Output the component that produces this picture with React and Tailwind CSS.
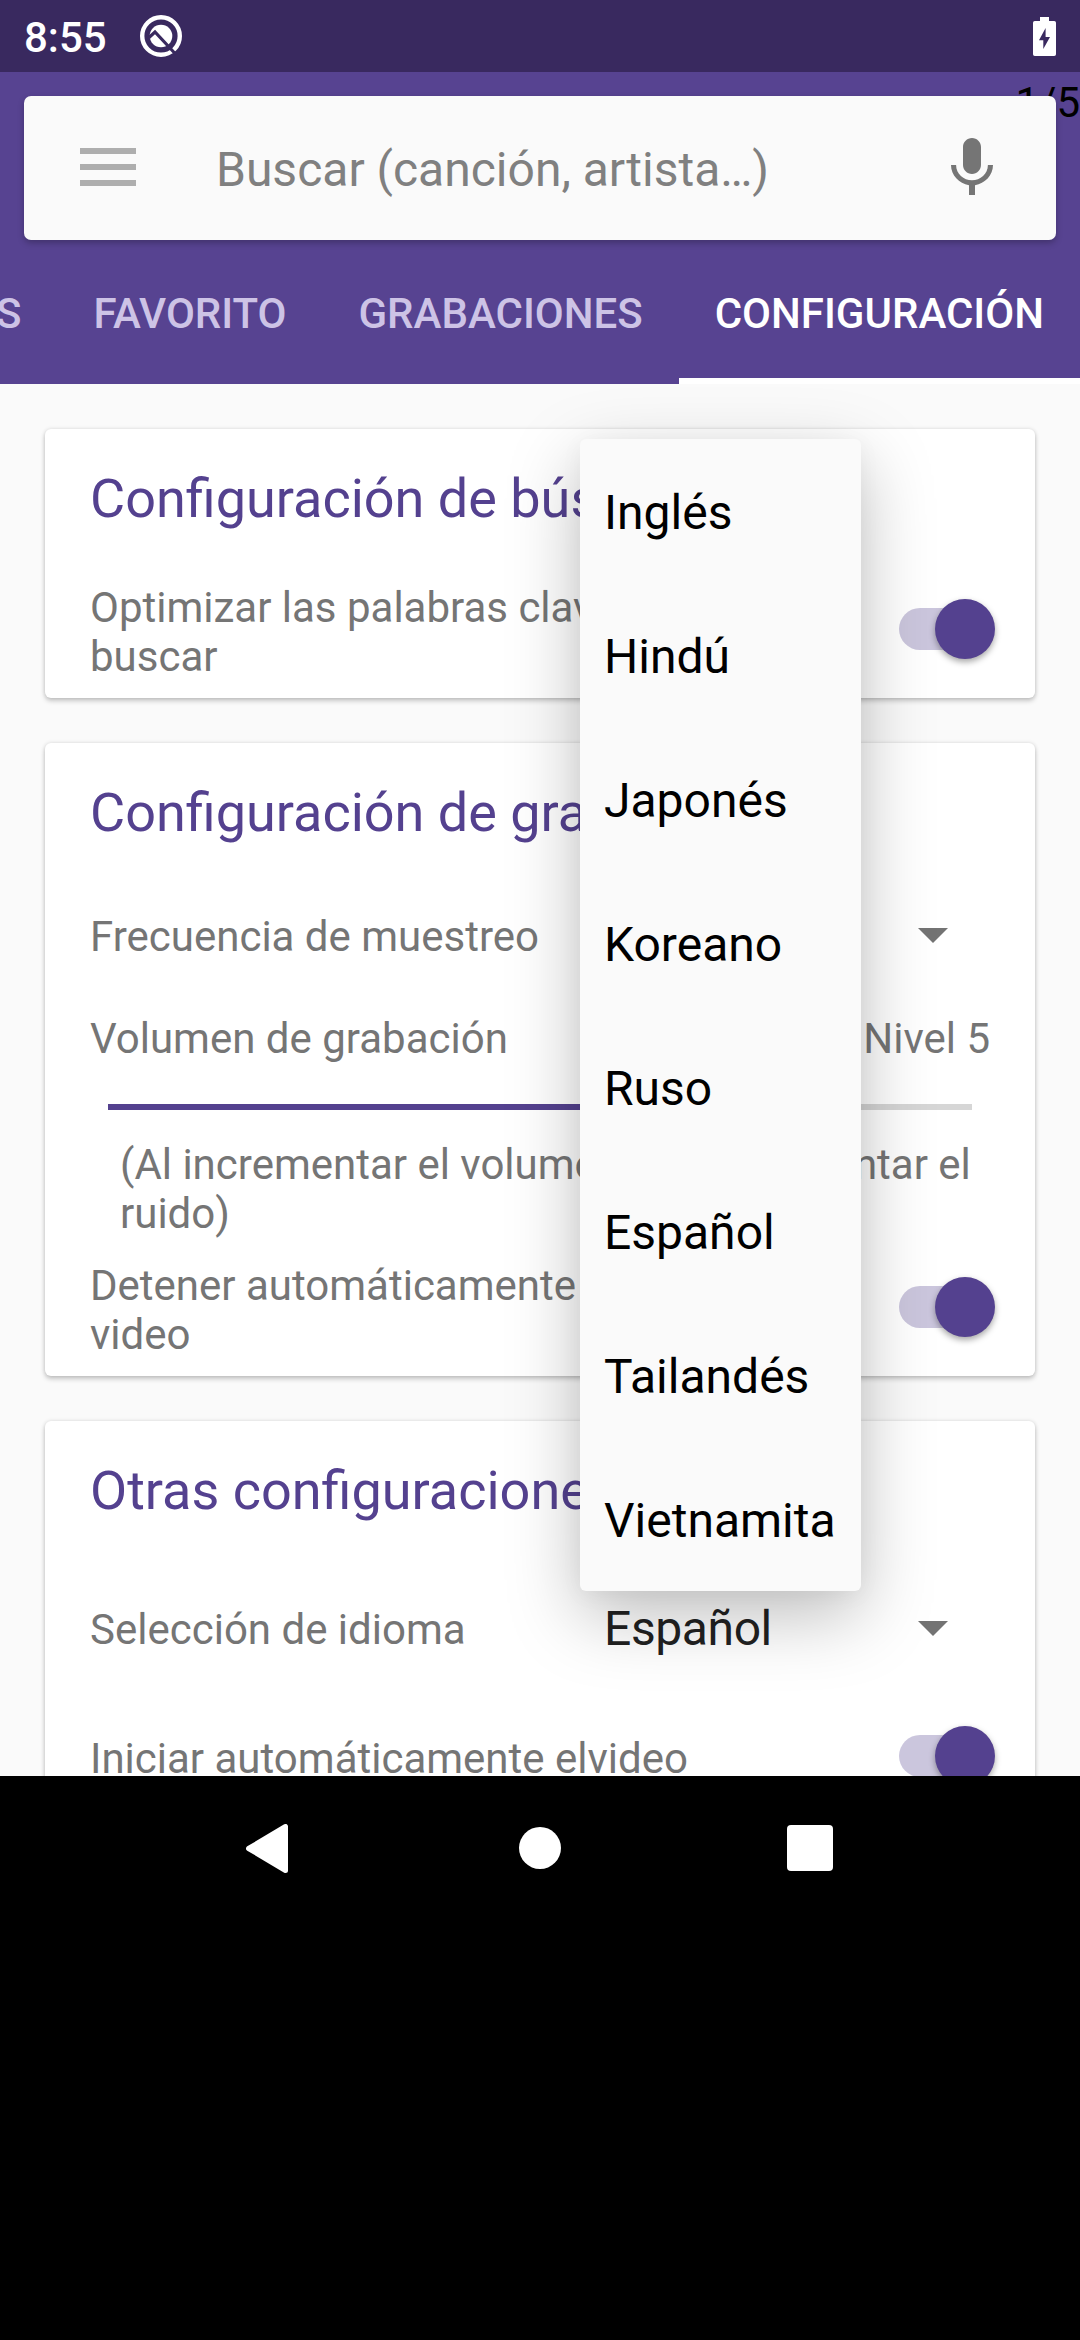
const languages = ["Inglés", "Hindú", "Japonés", "Koreano", "Ruso", "Español", "Tailandés", "Vietnamita"];

function Switch({ className }) {
  return (
    <div className={`relative flex h-[60px] w-[96px] shrink-0 items-center ${className}`}>
      <div className="h-[42px] w-[88px] rounded-full bg-[#54418f]/30" />
      <div className="absolute top-0 right-0 size-[60px] rounded-full bg-[#54418f] shadow-[0_3px_6px_rgba(0,0,0,0.35)]" />
    </div>
  );
}

function Caret({ className }) {
  return (
    <svg className={`h-[15px] w-[30px] shrink-0 ${className}`} viewBox="0 0 30 15">
      <path d="M0 0h30L15 15z" fill="#737373" />
    </svg>
  );
}

function Card({ title, className, children }) {
  return (
    <section
      className={`flex shrink-0 flex-col rounded-[6px] bg-white px-[45px] pt-[38px] shadow-[0_3px_5px_rgba(0,0,0,0.2),0_0_4px_rgba(0,0,0,0.12)] ${className}`}
    >
      <h2 className="h-[63px] shrink-0 text-[54px] leading-[63px] whitespace-nowrap text-[#54418f]">{title}</h2>
      {children}
    </section>
  );
}

function StatusBar() {
  return (
    <div className="flex h-[72px] items-center bg-[#39295f] pr-6 pl-6 text-white">
      <span className="mt-[3px] text-[42px] leading-[49px] font-medium">8:55</span>
      <svg className="ml-8 size-[44px]" viewBox="0 0 44 44">
        <circle cx="22" cy="22" r="18.8" fill="none" stroke="#fff" strokeWidth="4.4" />
        <circle cx="22" cy="22" r="11.3" fill="#fff" />
        <path d="M10 23.500L16 18L37 40.500" fill="none" stroke="#39295f" strokeWidth="3.2" />
      </svg>
      <svg className="ml-auto h-[39px] w-[23px]" viewBox="0 0 23 39">
        <path
          fillRule="evenodd"
          fill="#fff"
          d="M7 0h9v4h5.200a1.800 1.800 0 0 1 1.800 1.800v31.400a1.800 1.800 0 0 1-1.800 1.800H1.800A1.800 1.800 0 0 1 0 37.200V5.800A1.800 1.800 0 0 1 1.800 4H7zM12.600 11L6 23.200h4.300V32L17 20h-4.400z"
        />
      </svg>
    </div>
  );
}

function AppBar() {
  return (
    <header className="relative flex h-[312px] flex-col overflow-hidden bg-[#574391] px-6 pt-6">
      <span className="absolute top-[6px] right-0 text-[42px] leading-[49px] text-black">1/5</span>
      <div className="relative flex h-[144px] shrink-0 items-center rounded-[7px] bg-[#fafafa] pr-12 pl-14 shadow-[0_3px_6px_rgba(0,0,0,0.25)]">
        <div className="mb-[2px] flex w-14 flex-col gap-[10px]">
          <div className="h-[6px] bg-[#aeaeae]" />
          <div className="h-[6px] bg-[#aeaeae]" />
          <div className="h-[6px] bg-[#aeaeae]" />
        </div>
        <span className="mt-[3px] ml-20 text-[48px] leading-[57px] whitespace-nowrap text-[#808080]">
          Buscar (canción, artista…)
        </span>
        <svg className="ml-auto size-[72px]" viewBox="0 0 24 24" fill="#757575">
          <path d="M12 14c1.660 0 2.990-1.340 2.990-3L15 5c0-1.660-1.340-3-3-3S9 3.340 9 5v6c0 1.660 1.340 3 3 3zm5.300-3c0 3-2.540 5.100-5.300 5.100S6.700 14 6.700 11H5c0 3.410 2.720 6.230 6 6.720V21h2v-3.280c3.280-.48 6-3.300 6-6.720h-1.700z" />
        </svg>
      </div>
      <nav className="-mx-6 flex h-[144px] shrink-0 justify-end text-[42px] leading-[49px] font-medium whitespace-nowrap text-[#cdc3e6]">
        <span className="px-9 pt-[49px]">CANCIONES</span>
        <span className="px-9 pt-[49px]">FAVORITO</span>
        <span className="px-9 pt-[49px]">GRABACIONES</span>
        <span className="border-b-[6px] border-white px-9 pt-[49px] text-white">CONFIGURACIÓN</span>
      </nav>
    </header>
  );
}

function LanguageMenu() {
  return (
    <ul className="absolute top-[439px] left-[580px] w-[281px] rounded-[6px] bg-[#fafafa] shadow-[0_24px_72px_rgba(0,0,0,0.26),0_4px_24px_rgba(0,0,0,0.04)]">
      {languages.map((name) => (
        <li key={name} className="flex h-[144px] items-center pl-6 text-[48px] leading-[57px] text-black">
          <span className="mt-[3px]">{name}</span>
        </li>
      ))}
    </ul>
  );
}

function NavBar() {
  return (
    <div className="flex h-[144px] items-center pl-[246px]">
      <svg className="h-[49px] w-[42px]" viewBox="0 0 42 49">
        <path d="M2.500 24.500L39.500 2.500V46.500z" fill="#fff" stroke="#fff" strokeWidth="5" strokeLinejoin="round" />
      </svg>
      <div className="ml-[231px] size-[42px] rounded-full bg-white" />
      <div className="ml-[226px] size-[46px] rounded-[4px] bg-white" />
    </div>
  );
}

export default function App() {
  return (
    <div className="relative h-[2340px] w-[1080px] overflow-hidden bg-black font-['Roboto',sans-serif]">
      <div className="relative h-[1776px] overflow-hidden bg-[#fafafa]">
        <StatusBar />
        <AppBar />
        <main className="flex flex-col gap-[45px] px-[45px] pt-[45px] text-[42px] leading-[49px] whitespace-nowrap text-[#757575]">
          <Card title="Configuración de búsqueda" className="h-[269px]">
            <div className="mt-[53px] flex h-[98px] justify-between">
              <p>
                Optimizar las palabras clave al
                <br />
                buscar
              </p>
              <Switch className="mt-4 -mr-[5px]" />
            </div>
          </Card>

          <Card title="Configuración de grabación" className="h-[633px]">
            <div className="mt-[68px] flex h-[49px] justify-between">
              <span>Frecuencia de muestreo</span>
              <Caret className="mt-4 mr-[42px]" />
            </div>
            <div className="mt-[53px] flex justify-between">
              <span>Volumen de grabación</span>
              <span>Nivel 5</span>
            </div>
            <div className="mx-[18px] mt-[41px] flex h-[6px] bg-[#d6d6d6]">
              <div className="w-3/5 bg-[#54418f]" />
            </div>
            <p className="mt-[30px] pl-[30px]">
              (Al incrementar el volumen <span className="tracking-[-1px]">puede a</span>umentar el
              <br />
              ruido)
            </p>
            <div className="mt-[23px] flex h-[98px] justify-between">
              <p>
                Detener automáticamente el
                <br />
                video
              </p>
              <Switch className="mt-4 -mr-[5px]" />
            </div>
          </Card>

          <Card title="Otras configuraciones" className="h-[500px]">
            <div className="mt-[78px] flex h-[57px] items-center">
              <span className="mt-[2px] w-[514px]">Selección de idioma</span>
              <span className="text-[48px] leading-[57px] tracking-[-0.4px] text-[#212121]">Español</span>
              <Caret className="mr-[42px] ml-auto" />
            </div>
            <div className="mt-[69px] flex justify-between">
              <span className="mt-2">Iniciar automáticamente elvideo</span>
              <Switch className="-mr-[5px]" />
            </div>
          </Card>
        </main>
        <LanguageMenu />
      </div>
      <NavBar />
    </div>
  );
}
